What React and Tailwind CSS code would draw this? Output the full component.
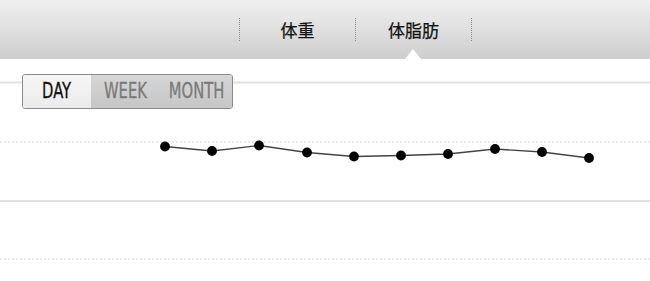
import React from 'react';

const points = [
  [165, 87.5], [212, 92], [259, 86.5], [307, 93.5], [354, 97.5],
  [401, 96.5], [448, 95], [495, 90], [542, 93], [589, 99],
];

const tabs = ['体重', '体脂肪'];

export default function App() {
  const path = points.map(([x, y], i) => `${i ? 'L' : 'M'}${x} ${y}`).join(' ');

  return (
    <div className="w-[650px] h-[281px] bg-white overflow-hidden" style={{ fontFamily: '"Noto Sans CJK JP", "Noto Sans", sans-serif' }}>
      {/* Header tabs */}
      <div className="relative h-[59px] bg-gradient-to-b from-[#f0f0f0] to-[#cecece] flex items-center pl-[239px]">
        <div className="h-[23px] border-l border-dotted border-[#8a8a8a]" />
        {tabs.map((t) => (
          <React.Fragment key={t}>
            <div className="w-[115px] text-center text-[17px] leading-none text-[#111] [-webkit-text-stroke:0.25px_currentColor]">{t}</div>
            <div className="h-[23px] border-l border-dotted border-[#8a8a8a]" />
          </React.Fragment>
        ))}
        {/* active marker */}
        <div className="absolute left-[405px] bottom-0 w-0 h-0 border-l-[8px] border-r-[8px] border-b-[10px] border-l-transparent border-r-transparent border-b-white" />
      </div>

      {/* Chart area */}
      <div className="relative h-[222px]">
        <svg width="650" height="222" className="block">
          <line x1="0" x2="650" y1="23.5" y2="23.5" stroke="#e2e2e2" strokeWidth="2" />
          <line x1="0" x2="650" y1="83" y2="83" stroke="#d4d4d4" strokeWidth="1" strokeDasharray="2 2" />
          <line x1="0" x2="650" y1="142" y2="142" stroke="#e2e2e2" strokeWidth="2" />
          <line x1="0" x2="650" y1="200" y2="200" stroke="#d4d4d4" strokeWidth="1" strokeDasharray="2 2" />
          <path d={path} fill="none" stroke="#444" strokeWidth="1.4" />
          {points.map(([x, y]) => (
            <circle key={x} cx={x} cy={y} r="4.9" fill="#000" />
          ))}
        </svg>

        {/* range selector */}
        <div
          className="absolute left-[22px] top-[15px] w-[211px] h-[35px] flex rounded-[3px] border border-[#8a8a8a] overflow-hidden text-[21px] leading-none [-webkit-text-stroke:0.3px_currentColor]"
          style={{ fontFamily: '"DejaVu Sans Condensed", "DejaVu Sans", sans-serif', fontStretch: 'condensed' }}
        >
          <div className="w-[69px] flex items-center justify-center bg-gradient-to-b from-[#f6f6f6] to-[#ebebeb] text-[#111]">
            <span className="inline-block scale-x-[0.78]">DAY</span>
          </div>
          <div className="flex-1 flex bg-gradient-to-b from-[#d6d6d6] to-[#c6c6c6] text-[#7a7a7a]">
            <div className="w-[70px] flex items-center justify-center">
              <span className="inline-block scale-x-[0.78]">WEEK</span>
            </div>
            <div className="flex-1 flex items-center justify-center">
              <span className="inline-block scale-x-[0.78]">MONTH</span>
            </div>
          </div>
        </div>
      </div>
    </div>
  );
}
